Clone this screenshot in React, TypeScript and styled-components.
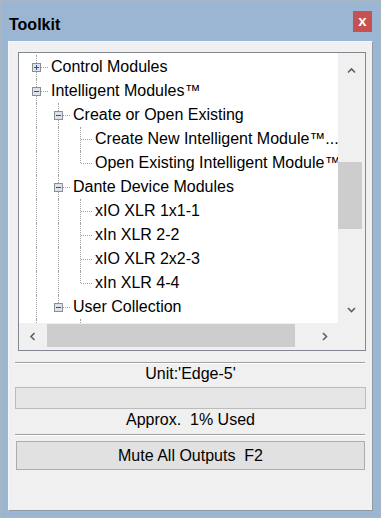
import React from 'react';
import styled, { createGlobalStyle } from 'styled-components';

const GlobalStyle = createGlobalStyle`
  html, body {
    margin: 0;
    padding: 0;
    background: #ffffff;
  }
  body {
    font-family: "Liberation Sans", Arial, sans-serif;
    color: #000000;
  }
`;

const Window = styled.div`
  width: 381px;
  height: 518px;
  box-sizing: border-box;
  border: 1px solid #aab6c4;
  background: #9bb6d3;
  display: flex;
  flex-direction: column;
`;

const TitleBar = styled.div`
  height: 40px;
  flex: none;
  display: flex;
  align-items: flex-start;
  justify-content: space-between;
  padding: 0 8px 0 8px;
`;

const Title = styled.span`
  margin-top: 15px;
  font-size: 16px;
  line-height: 17px;
  font-weight: 700;
`;

const CloseButton = styled.div`
  margin-top: 10px;
  width: 19px;
  height: 21px;
  background: #c75050;
  color: #ffffff;
  font-size: 15px;
  font-weight: 700;
  line-height: 19px;
  text-align: center;
`;

const Client = styled.div`
  flex: 1;
  margin: 0 7px 6px 7px;
  background: #f0f0f0;
  border: 1px solid;
  border-color: #f4f6f8 #8e99a6 #8e99a6 #f4f6f8;
  display: flex;
  flex-direction: column;
`;

const TreeBox = styled.div`
  margin: 10px 6px 0 9px;
  height: 299px;
  box-sizing: border-box;
  border: 1px solid #828790;
  display: grid;
  grid-template-columns: 1fr 27px;
  grid-template-rows: 1fr 27px;
  background: #ffffff;
`;

const TreeContent = styled.div`
  overflow: hidden;
  padding: 2px 0 0 6px;
`;

const Row = styled.div`
  height: 24px;
  display: flex;
  align-items: stretch;
  white-space: nowrap;
`;

const Guide = styled.div<{ line: boolean }>`
  width: 22px;
  flex: none;
  position: relative;

  &::before {
    content: '';
    display: ${({ line }) => (line ? 'block' : 'none')};
    position: absolute;
    left: 11px;
    top: 0;
    height: 24px;
    border-left: 1px dotted #a0a0a0;
  }
`;

const Connector = styled.div<{ last: boolean }>`
  width: 22px;
  flex: none;
  position: relative;
  display: flex;
  align-items: flex-start;
  padding: 8px 0 0 7px;
  box-sizing: border-box;

  &::before {
    content: '';
    position: absolute;
    left: 11px;
    top: 0;
    height: ${({ last }) => (last ? '12px' : '24px')};
    border-left: 1px dotted #a0a0a0;
  }

  &::after {
    content: '';
    position: absolute;
    left: 12px;
    top: 12px;
    width: 11px;
    border-top: 1px dotted #a0a0a0;
  }

  svg {
    position: relative;
    z-index: 1;
  }
`;

const Label = styled.span`
  margin-left: 4px;
  font-size: 16px;
  line-height: 24px;
`;

const VScroll = styled.div`
  background: #f0f0f0;
  display: flex;
  flex-direction: column;
`;

const HScroll = styled.div`
  background: #f0f0f0;
  display: flex;
`;

const Corner = styled.div`
  background: #f0f0f0;
`;

const ArrowButton = styled.div<{ size: number; vertical?: boolean }>`
  flex: none;
  ${({ vertical, size }) => (vertical ? `height: ${size}px;` : `width: ${size}px;`)}
  display: flex;
  align-items: center;
  justify-content: center;
`;

const Track = styled.div`
  flex: 1;
  display: flex;
`;

const VTrack = styled(Track)`
  flex-direction: column;
`;

const VThumb = styled.div<{ offset: number; length: number }>`
  margin-top: ${({ offset }) => offset}px;
  height: ${({ length }) => length}px;
  width: 24px;
  background: #cdcdcd;
`;

const HThumb = styled.div<{ offset: number; length: number }>`
  margin: 1px 0 0 ${({ offset }) => offset}px;
  width: ${({ length }) => length}px;
  height: 23px;
  background: #cdcdcd;
`;

const Separator = styled.div`
  margin: 11px 7px 0 6px;
  border-top: 1px solid #a0a0a0;
  border-bottom: 1px solid #ffffff;
`;

const SeparatorTight = styled(Separator)`
  margin-top: 3px;
`;

const Caption = styled.div<{ height: number }>`
  text-align: center;
  font-size: 16px;
  line-height: ${({ height }) => height}px;
`;

const Meter = styled.div`
  margin: 3px 6px 0 6px;
  height: 22px;
  box-sizing: border-box;
  border: 1px solid #bcbcbc;
  background: #e6e6e6;
`;

const MuteButton = styled.div`
  margin: 5px 7px 0 7px;
  height: 29px;
  box-sizing: border-box;
  border: 1px solid #adadad;
  background: #e1e1e1;
  font-size: 16px;
  line-height: 27px;
  text-align: center;
`;

interface TreeRow {
  label: string;
  guides: boolean[];
  last: boolean;
  expander?: 'plus' | 'minus';
}

const ROWS: TreeRow[] = [
  { label: 'Control Modules', guides: [], last: false, expander: 'plus' },
  { label: 'Intelligent Modules™', guides: [], last: false, expander: 'minus' },
  { label: 'Create or Open Existing', guides: [true], last: false, expander: 'minus' },
  { label: 'Create New Intelligent Module™...', guides: [true, true], last: false },
  { label: 'Open Existing Intelligent Module™...', guides: [true, true], last: true },
  { label: 'Dante Device Modules', guides: [true], last: false, expander: 'minus' },
  { label: 'xIO XLR 1x1-1', guides: [true, true], last: false },
  { label: 'xIn XLR 2-2', guides: [true, true], last: false },
  { label: 'xIO XLR 2x2-3', guides: [true, true], last: false },
  { label: 'xIn XLR 4-4', guides: [true, true], last: true },
  { label: 'User Collection', guides: [true], last: true, expander: 'minus' },
  { label: '', guides: [true, false], last: false },
];

function Expander({ open }: { open: boolean }) {
  return (
    <svg width="9" height="9" viewBox="0 0 9 9">
      <rect x="0.5" y="0.5" width="8" height="8" fill="#dde3ec" stroke="#8e8e8e" />
      <path d="M2 4.5h5" stroke="#2a50a0" />
      {!open && <path d="M4.5 2v5" stroke="#2a50a0" />}
    </svg>
  );
}

function Chevron({ dir }: { dir: 'up' | 'down' | 'left' | 'right' }) {
  const paths = {
    up: 'M1 5.5 L4.5 2 L8 5.5',
    down: 'M1 2 L4.5 5.5 L8 2',
    left: 'M5.5 1 L2 4.5 L5.5 8',
    right: 'M2 1 L5.5 4.5 L2 8',
  };
  const wide = dir === 'up' || dir === 'down';
  return (
    <svg width={wide ? 9 : 7} height={wide ? 7 : 9} viewBox={wide ? '0 0 9 7' : '0 0 7 9'}>
      <path d={paths[dir]} fill="none" stroke="#606060" strokeWidth="1.6" />
    </svg>
  );
}

export default function App() {
  return (
    <>
      <GlobalStyle />
      <Window>
        <TitleBar>
          <Title>Toolkit</Title>
          <CloseButton>x</CloseButton>
        </TitleBar>
        <Client>
          <TreeBox>
            <TreeContent>
              {ROWS.map((row, i) => (
                <Row key={i}>
                  {row.guides.map((line, j) => (
                    <Guide key={j} line={line} />
                  ))}
                  <Connector last={row.last}>
                    {row.expander && <Expander open={row.expander === 'minus'} />}
                  </Connector>
                  {row.label && <Label>{row.label}</Label>}
                </Row>
              ))}
            </TreeContent>
            <VScroll>
              <ArrowButton vertical size={34}>
                <Chevron dir="up" />
              </ArrowButton>
              <VTrack>
                <VThumb offset={75} length={67} />
              </VTrack>
              <ArrowButton vertical size={28}>
                <Chevron dir="down" />
              </ArrowButton>
            </VScroll>
            <HScroll>
              <ArrowButton size={27}>
                <Chevron dir="left" />
              </ArrowButton>
              <Track>
                <HThumb offset={1} length={248} />
              </Track>
              <ArrowButton size={27}>
                <Chevron dir="right" />
              </ArrowButton>
            </HScroll>
            <Corner />
          </TreeBox>
          <Separator />
          <Caption height={20}>Unit:'Edge-5'</Caption>
          <Meter />
          <Caption height={22}>Approx.&nbsp; 1% Used</Caption>
          <SeparatorTight />
          <MuteButton>Mute All Outputs&nbsp; F2</MuteButton>
        </Client>
      </Window>
    </>
  );
}
